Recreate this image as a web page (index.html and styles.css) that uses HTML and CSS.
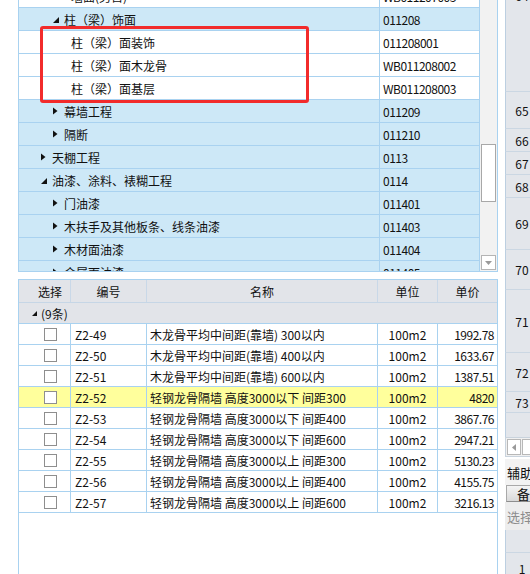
FILE: index.html
```html
<!DOCTYPE html>
<html lang="zh-CN">
<head>
<meta charset="utf-8">
<title>定额选择</title>
<link rel="stylesheet" href="styles.css">
</head>
<body>
<div class="app">
  <div class="main">
    <div class="tree">
      <div class="tree-rows">
        <div class="tree-inner">
          <div class="trow"><div class="name lv3">墙面(另售)</div><div class="code">WB011207003</div></div>
          <div class="trow group"><div class="name lv2"><span class="tw"><svg class="ico-open" width="6" height="6" viewBox="0 0 6 6"><polygon points="6,0 6,6 0,6" fill="#111"/></svg></span>柱（梁）饰面</div><div class="code">011208</div></div>
          <div class="trow"><div class="name lv3">柱（梁）面装饰</div><div class="code">011208001</div></div>
          <div class="trow"><div class="name lv3">柱（梁）面木龙骨</div><div class="code">WB011208002</div></div>
          <div class="trow"><div class="name lv3">柱（梁）面基层</div><div class="code">WB011208003</div></div>
          <div class="trow group"><div class="name lv2"><span class="tw"><svg width="5" height="8" viewBox="0 0 5 8"><polygon points="0,0.5 4.5,4 0,7.5" fill="#111"/></svg></span>幕墙工程</div><div class="code">011209</div></div>
          <div class="trow group"><div class="name lv2"><span class="tw"><svg width="5" height="8" viewBox="0 0 5 8"><polygon points="0,0.5 4.5,4 0,7.5" fill="#111"/></svg></span>隔断</div><div class="code">011210</div></div>
          <div class="trow group"><div class="name lv1"><span class="tw"><svg width="5" height="8" viewBox="0 0 5 8"><polygon points="0,0.5 4.5,4 0,7.5" fill="#111"/></svg></span>天棚工程</div><div class="code">0113</div></div>
          <div class="trow group"><div class="name lv1"><span class="tw"><svg class="ico-open" width="6" height="6" viewBox="0 0 6 6"><polygon points="6,0 6,6 0,6" fill="#111"/></svg></span>油漆、涂料、裱糊工程</div><div class="code">0114</div></div>
          <div class="trow group"><div class="name lv2"><span class="tw"><svg width="5" height="8" viewBox="0 0 5 8"><polygon points="0,0.5 4.5,4 0,7.5" fill="#111"/></svg></span>门油漆</div><div class="code">011401</div></div>
          <div class="trow group"><div class="name lv2"><span class="tw"><svg width="5" height="8" viewBox="0 0 5 8"><polygon points="0,0.5 4.5,4 0,7.5" fill="#111"/></svg></span>木扶手及其他板条、线条油漆</div><div class="code">011403</div></div>
          <div class="trow group"><div class="name lv2"><span class="tw"><svg width="5" height="8" viewBox="0 0 5 8"><polygon points="0,0.5 4.5,4 0,7.5" fill="#111"/></svg></span>木材面油漆</div><div class="code">011404</div></div>
          <div class="trow group"><div class="name lv2"><span class="tw"><svg width="5" height="8" viewBox="0 0 5 8"><polygon points="0,0.5 4.5,4 0,7.5" fill="#111"/></svg></span>金属面油漆</div><div class="code">011405</div></div>
        </div>
      </div>
      <div class="vscroll">
        <div class="vthumb"></div>
        <div class="vspace"></div>
        <div class="varrow"><svg width="7" height="4" viewBox="0 0 7 4"><polygon points="0,0 7,0 3.5,4" fill="#9a9a9a"/></svg></div>
      </div>
    </div>

    <div class="grid">
      <div class="grow ghead">
        <div class="c c1">选择</div>
        <div class="c c2">编号</div>
        <div class="c c3">名称</div>
        <div class="c c4">单位</div>
        <div class="c c5">单价</div>
      </div>
      <div class="ggroup"><svg width="5" height="5" viewBox="0 0 5 5"><polygon points="5,0 5,5 0,5" fill="#111"/></svg><span>(9条)</span></div>
      <div class="grow"><div class="c c1"><span class="cb"></span></div><div class="c c2">Z2-49</div><div class="c c3">木龙骨平均中间距(靠墙) 300以内</div><div class="c c4">100m2</div><div class="c c5">1992.78</div></div>
      <div class="grow"><div class="c c1"><span class="cb"></span></div><div class="c c2">Z2-50</div><div class="c c3">木龙骨平均中间距(靠墙) 400以内</div><div class="c c4">100m2</div><div class="c c5">1633.67</div></div>
      <div class="grow"><div class="c c1"><span class="cb"></span></div><div class="c c2">Z2-51</div><div class="c c3">木龙骨平均中间距(靠墙) 600以内</div><div class="c c4">100m2</div><div class="c c5">1387.51</div></div>
      <div class="grow sel"><div class="c c1"><span class="cb"></span></div><div class="c c2">Z2-52</div><div class="c c3">轻钢龙骨隔墙 高度3000以下 间距300</div><div class="c c4">100m2</div><div class="c c5">4820</div></div>
      <div class="grow"><div class="c c1"><span class="cb"></span></div><div class="c c2">Z2-53</div><div class="c c3">轻钢龙骨隔墙 高度3000以下 间距400</div><div class="c c4">100m2</div><div class="c c5">3867.76</div></div>
      <div class="grow"><div class="c c1"><span class="cb"></span></div><div class="c c2">Z2-54</div><div class="c c3">轻钢龙骨隔墙 高度3000以下 间距600</div><div class="c c4">100m2</div><div class="c c5">2947.21</div></div>
      <div class="grow"><div class="c c1"><span class="cb"></span></div><div class="c c2">Z2-55</div><div class="c c3">轻钢龙骨隔墙 高度3000以上 间距300</div><div class="c c4">100m2</div><div class="c c5">5130.23</div></div>
      <div class="grow"><div class="c c1"><span class="cb"></span></div><div class="c c2">Z2-56</div><div class="c c3">轻钢龙骨隔墙 高度3000以上 间距400</div><div class="c c4">100m2</div><div class="c c5">4155.75</div></div>
      <div class="grow"><div class="c c1"><span class="cb"></span></div><div class="c c2">Z2-57</div><div class="c c3">轻钢龙骨隔墙 高度3000以上 间距600</div><div class="c c4">100m2</div><div class="c c5">3216.13</div></div>
    </div>
  </div>

  <div class="side">
    <div class="rnlist">
      <div class="rn h192"><span>64</span></div>
      <div class="rn h37"><span>65</span></div>
      <div class="rn h23"><span>66</span></div>
      <div class="rn h23"><span>67</span></div>
      <div class="rn h23"><span>68</span></div>
      <div class="rn h52"><span>69</span></div>
      <div class="rn h40"><span>70</span></div>
      <div class="rn h63"><span>71</span></div>
      <div class="rn h39"><span>72</span></div>
      <div class="rn h21"><span>73</span></div>
      <div class="rn fill"></div>
    </div>
    <div class="hscroll">
      <div class="hbtn"><svg width="4" height="7" viewBox="0 0 4 7"><polygon points="4,0 4,7 0,3.5" fill="#9a9a9a"/></svg></div>
      <div class="hthumb"></div>
    </div>
    <div class="aux">辅助</div>
    <div class="notebtn">备注</div>
    <div class="pick">选择</div>
    <div class="rn h22"></div>
    <div class="rn last"><span>1</span></div>
  </div>
</div>
<div class="mark"></div>
</body>
</html>
```

FILE: styles.css
```css
* { box-sizing: border-box; }
html, body { margin: 0; padding: 0; }
body {
  width: 530px;
  height: 574px;
  overflow: hidden;
  position: relative;
  background: #fff;
  color: #111;
  font-family: "Noto Sans CJK SC", "Microsoft YaHei", sans-serif;
  font-size: 12px;
}
.app { display: flex; height: 574px; }
.main { width: 498px; flex: none; display: flex; flex-direction: column; }

/* tree */
.tree {
  margin-left: 18px;
  width: 480px;
  height: 272px;
  flex: none;
  display: flex;
  border: 1px solid #a9d2f0;
  border-top: none;
}
.tree-rows { width: 460px; overflow: hidden; }
.tree-inner { margin-top: -15px; }
.trow {
  display: grid;
  grid-template-columns: 361px 99px;
  height: 23px;
  border-bottom: 1px solid #a9d2f0;
  background: #fff;
}
.trow.group { background: #cde8f7; }
.trow .name {
  display: flex;
  align-items: center;
  white-space: nowrap;
  border-right: 1px solid #a9d2f0;
}
.trow .code {
  display: flex;
  align-items: center;
  padding-left: 3px;
  letter-spacing: -0.5px;
  white-space: nowrap;
}
.lv1 { padding-left: 22px; }
.lv2 { padding-left: 34px; }
.lv3 { padding-left: 52px; }
.tw { width: 11px; flex: none; display: flex; align-items: center; }
.ico-open { margin-top: 2px; }

.vscroll {
  width: 18px;
  background: #f2f2f2;
  border-left: 1px solid #a9d2f0;
  display: flex;
  flex-direction: column;
  padding: 144px 1px 1px 1px;
}
.vthumb { height: 58px; background: #fff; border: 1px solid #a8a8a8; }
.vspace { flex: 1; }
.varrow {
  height: 15px;
  background: #fff;
  border: 1px solid #b4b4b4;
  display: flex;
  align-items: center;
  justify-content: center;
}

/* grid */
.grid {
  margin-left: 18px;
  margin-top: 7px;
  width: 480px;
  flex: 1;
  border: 1px solid #a9d2f0;
  border-bottom: none;
}
.grow {
  display: grid;
  grid-template-columns: 52px 76px 231px 60px 59px;
  height: 21px;
  border-bottom: 1px solid #a9d2f0;
  background: #fff;
}
.grow.sel { background: #ffff9c; }
.c {
  display: flex;
  align-items: center;
  white-space: nowrap;
  overflow: hidden;
  border-right: 1px solid #a9d2f0;
}
.c5 { border-right: none; }
.c1 { padding-left: 25px; }
.c2 { padding-left: 4px; }
.c3 { padding-left: 3px; }
.c4 { justify-content: center; }
.c5 { justify-content: flex-end; padding-right: 3px; letter-spacing: -0.5px; }
.cb {
  width: 13px;
  height: 13px;
  background: #fff;
  border: 1px solid #8e8e8e;
}
.ghead {
  height: 23px;
  background: #e2e4e9;
  border-bottom: 1px solid #c6d6e6;
}
.ghead .c {
  justify-content: center;
  padding: 0;
  border-right: 1px solid #c9d8e8;
  letter-spacing: 0;
}
.ghead .c1 { padding-left: 11px; }
.ghead .c5 { border-right: none; }
.ggroup {
  height: 21px;
  background: #e2e4e9;
  border-bottom: 1px solid #a9d2f0;
  display: flex;
  align-items: center;
  padding-left: 13px;
  gap: 4px;
}
.ggroup svg { margin-top: 1px; }

/* right side */
.side {
  margin-left: 7px;
  width: 25px;
  flex: none;
  overflow: hidden;
  display: flex;
  flex-direction: column;
}
.side > * { width: 60px; flex: none; }
.rnlist { margin-top: -100px; }
.rn {
  display: flex;
  align-items: center;
  background: #e3e6eb;
  border-left: 1px solid #bccfe1;
  border-bottom: 1px solid #cbd7e3;
}
.rn span { width: 32px; text-align: center; }
.h192 { height: 192px; }
.h37 { height: 37px; }
.h23 { height: 23px; }
.h52 { height: 52px; }
.h40 { height: 40px; }
.h63 { height: 63px; }
.h39 { height: 39px; }
.h21 { height: 21px; }
.h22 { height: 23px; }
.rn.fill { height: 24px; border-bottom: none; }
.rn.last { height: 30px; border-bottom: none; }
.hscroll {
  height: 20px;
  background: #f0f0f0;
  border: 1px solid #c9d3dd;
  display: flex;
  align-items: center;
  padding-left: 1px;
  gap: 1px;
}
.hbtn {
  width: 14px;
  height: 16px;
  background: #fff;
  border: 1px solid #b8b8b8;
  display: flex;
  align-items: center;
  justify-content: center;
}
.hthumb { width: 24px; height: 16px; background: #fff; border: 1px solid #b8b8b8; }
.aux {
  margin-top: 2px;
  margin-left: -1px;
  height: 26px;
  background: #f3f3f3;
  display: flex;
  align-items: center;
  padding-left: 3px;
  font-size: 13px;
}
.notebtn {
  margin-left: 1px;
  height: 17px;
  border: 1px solid #a9a9a9;
  border-bottom-color: #8e8e8e;
  background: linear-gradient(#f4f4f4, #d9d9d9);
  display: flex;
  align-items: center;
  padding-left: 10px;
  font-size: 13px;
}
.pick {
  margin-left: -2px;
  height: 28px;
  background: #ededed;
  color: #8c8c8c;
  display: flex;
  align-items: center;
  padding-left: 4px;
  font-size: 13px;
}

/* red annotation */
.mark {
  position: absolute;
  left: 40px;
  top: 26px;
  width: 269px;
  height: 77px;
  border: 3px solid #f22b2b;
  border-radius: 3px;
}
```
